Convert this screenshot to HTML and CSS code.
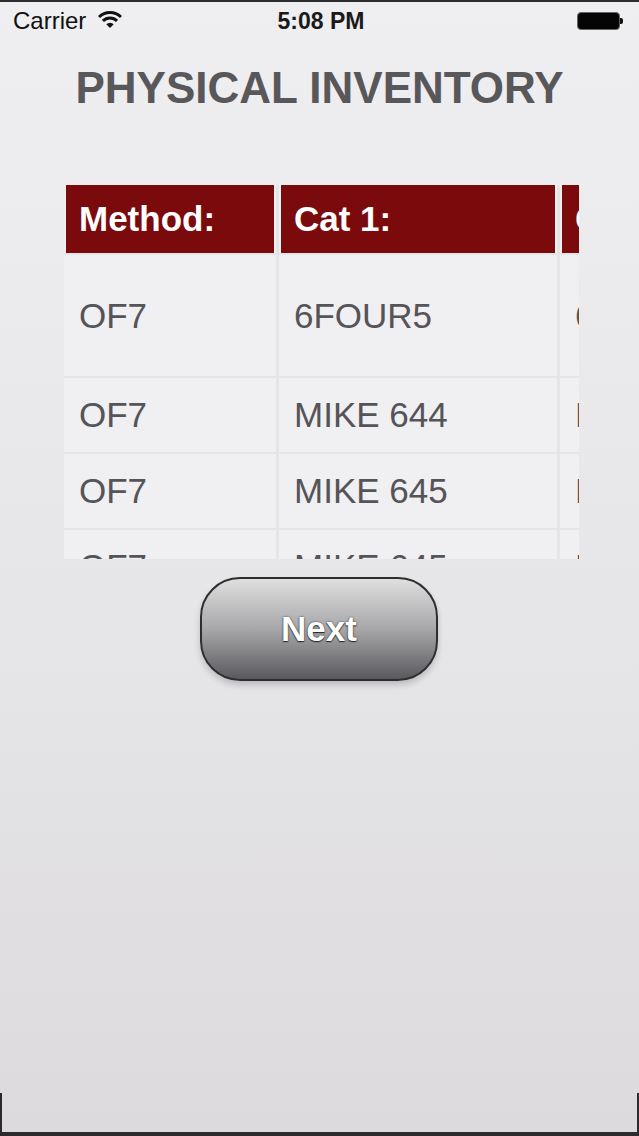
FILE: index.html
```html
<!DOCTYPE html>
<html lang="en">
<head>
    <meta charset="UTF-8">
    <meta name="viewport" content="width=device-width, initial-scale=1.0">
    <title>Physical Inventory</title>
    <link rel="stylesheet" href="styles.css">
</head>
<body>
    <div class="screen">
        <!-- Barra de status -->
        <div class="statusbar">
            <div class="carrier">
                Carrier
                <svg class="wifi" width="24" height="19" viewBox="0 0 24 19">
                    <path d="M1.04 7.04 A15.5 15.5 0 0 1 22.96 7.04" fill="none" stroke="#111" stroke-width="3"/>
                    <path d="M4.9 10.9 A10 10 0 0 1 19.1 10.9" fill="none" stroke="#111" stroke-width="3"/>
                    <path d="M12 18 L8.3 14.3 A5.2 5.2 0 0 1 15.7 14.3 Z" fill="#111"/>
                </svg>
            </div>
            <div class="time">5:08 PM</div>
            <div class="battery">
                <span class="battery-body"></span>
                <span class="battery-nub"></span>
            </div>
        </div>

        <h1 class="title">PHYSICAL INVENTORY</h1>

        <!-- Tabela de contagem -->
        <div class="grid-wrap">
            <div class="grid">
                <div class="head"><span>Method:</span></div>
                <div class="head"><span>Cat 1:</span></div>
                <div class="head"><span>Cat 2:</span></div>

                <div class="cell">OF7</div>
                <div class="cell">6FOUR5</div>
                <div class="cell">6FOUR5</div>

                <div class="cell">OF7</div>
                <div class="cell">MIKE 644</div>
                <div class="cell">MIKE 644</div>

                <div class="cell">OF7</div>
                <div class="cell">MIKE 645</div>
                <div class="cell">MIKE 645</div>

                <div class="cell">OF7</div>
                <div class="cell">MIKE 645</div>
                <div class="cell">MIKE 645</div>
            </div>
        </div>

        <button class="next">Next</button>

        <div class="frame"></div>
    </div>
</body>
</html>
```

FILE: styles.css
```css
body {
    margin: 0;
    font-family: "Liberation Sans", Arial, sans-serif;
}

.screen {
    height: 1136px;
    box-sizing: border-box;
    border-top: 2px solid #2b2b2b;
    background: linear-gradient(#efeef0, #e6e5e7 55%, #dcdadd);
    display: flex;
    flex-direction: column;
    align-items: center;
}

/* Barra de status */
.statusbar {
    width: 100%;
    height: 38px;
    box-sizing: border-box;
    padding: 0 12px 0 13px;
    display: grid;
    grid-template-columns: 1fr auto 1fr;
    align-items: center;
    font-size: 24px;
    color: #111;
}

.carrier {
    display: flex;
    align-items: center;
    gap: 12px;
}

.wifi {
    margin-top: -3px;
}

.time {
    font-weight: bold;
    font-size: 23px;
    padding-left: 2px;
    color: #1a1a1a;
}

.battery {
    justify-self: end;
    display: flex;
    align-items: center;
    padding-right: 4px;
}

.battery-body {
    width: 41px;
    height: 16px;
    background: #050505;
    border: 1px solid #666;
    border-radius: 4px;
}

.battery-nub {
    width: 3px;
    height: 6px;
    background: #111;
    border-radius: 0 2px 2px 0;
}

/* Titulo */
.title {
    margin: 26px 0 0;
    font-size: 44px;
    line-height: 44px;
    font-weight: bold;
    color: #58575a;
}

/* Tabela */
.grid-wrap {
    margin-top: 75px;
    margin-left: 4px;
    width: 515px;
    height: 374px;
    overflow: hidden;
}

.grid {
    display: grid;
    grid-template-columns: 212px 278px 278px;
    grid-template-rows: 68px 121px 74px 74px 74px;
    column-gap: 3px;
    row-gap: 2px;
    background: #e5e4e6;
    width: max-content;
    font-size: 35px;
}

.head {
    background: #efeef0;
    padding: 0 2px;
}

.head span {
    display: flex;
    align-items: center;
    height: 100%;
    padding-left: 13px;
    background: #7b0a0c;
    color: #fff;
    font-weight: bold;
}

.cell {
    background: #f0eff1;
    color: #555458;
    display: flex;
    align-items: center;
    padding-left: 15px;
    white-space: nowrap;
}

/* Botao */
.next {
    margin-top: 18px;
    margin-left: -1px;
    width: 238px;
    height: 104px;
    border: 2px solid #2e2e30;
    border-radius: 40px;
    background: linear-gradient(#dfdfe0, #a7a7a9 50%, #5a595e);
    box-shadow: 0 4px 6px rgba(0, 0, 0, 0.18);
    color: #fff;
    font-family: "Liberation Sans", Arial, sans-serif;
    font-size: 35px;
    font-weight: bold;
    text-shadow: 0 0 2px #333, 0 1px 1px #222;
}

/* Moldura inferior */
.frame {
    margin-top: auto;
    width: 100%;
    height: 43px;
    box-sizing: border-box;
    border: 2px solid #2b2b2b;
    border-top: none;
    border-bottom-width: 4px;
}
```
